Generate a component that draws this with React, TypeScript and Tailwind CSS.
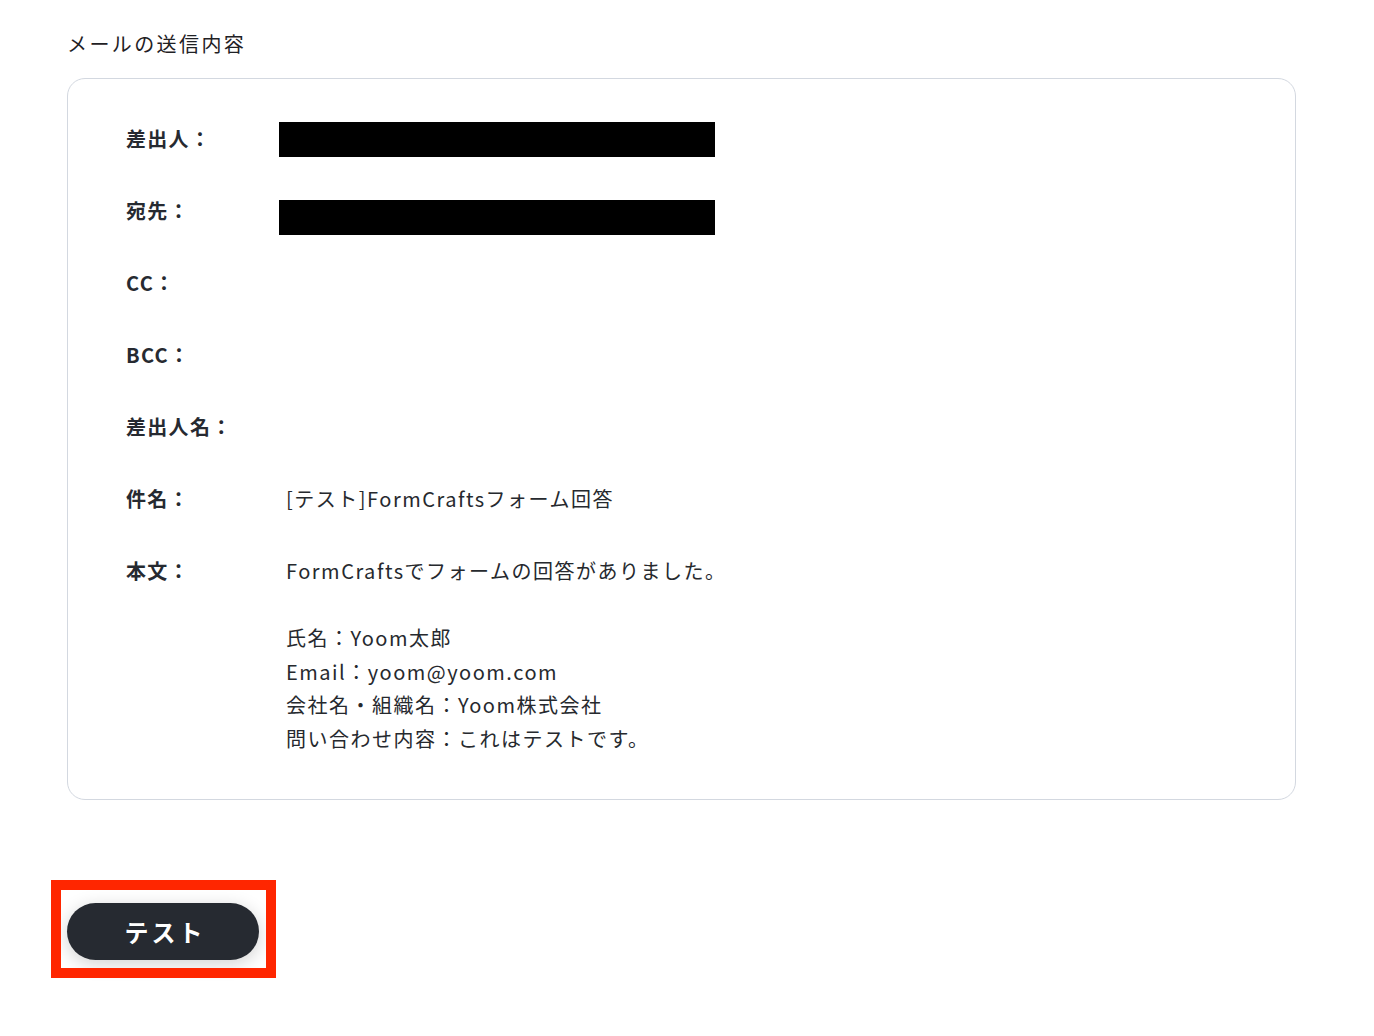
import React from "react";

const font = { fontFamily: '"Noto Sans CJK JP", "Noto Sans", sans-serif' };

function Row({ label, children }: { label: string; children?: React.ReactNode }) {
  return (
    <div className="flex">
      <div className="w-[160px] shrink-0 text-[20px] leading-[34px] font-bold text-[#262a31] tracking-[1.3px]">{label}</div>
      <div className="flex-1 relative text-[20px] leading-[34px] font-normal text-[#26292e] tracking-[1.5px]">{children}</div>
    </div>
  );
}

export default function App() {
  return (
    <div className="min-h-[1036px] bg-white pl-[67px] pt-[30px]" style={font}>
      <div className="text-[20px] leading-[28px] font-normal text-[#1f2125] tracking-[2.4px]">メールの送信内容</div>
      <div className="mt-[20px] w-[1229px] h-[722px] border border-[#d3d8e0] rounded-[18px] pl-[58px] pt-[43px] flex flex-col gap-[38px]">
        <Row label="差出人：">
          <div className="absolute left-[-7px] top-0 w-[436px] h-[35px] bg-black" />
          <span>&nbsp;</span>
        </Row>
        <Row label="宛先：">
          <div className="absolute left-[-7px] top-[6px] w-[436px] h-[35px] bg-black" />
          <span>&nbsp;</span>
        </Row>
        <Row label="CC：" />
        <Row label="BCC：" />
        <Row label="差出人名：" />
        <Row label="件名：">[テスト]FormCraftsフォーム回答</Row>
        <div className="flex">
          <div className="w-[160px] shrink-0 text-[20px] leading-[34px] font-bold text-[#262a31] tracking-[1.3px]">本文：</div>
          <div className="flex-1 text-[20px] leading-[33.5px] font-normal text-[#26292e] tracking-[1.5px]">
            <div>FormCraftsでフォームの回答がありました。</div>
            <div>&nbsp;</div>
            <div>氏名：Yoom太郎</div>
            <div>Email：yoom@yoom.com</div>
            <div>会社名・組織名：Yoom株式会社</div>
            <div>問い合わせ内容：これはテストです。</div>
          </div>
        </div>
      </div>
      <div className="mt-[103px] relative w-[192px]">
        <button className="w-[192px] h-[57px] pl-[4px] rounded-full bg-[#262a31] text-white text-[24px] font-bold tracking-[3px] shadow-[0_4px_18px_rgba(0,0,0,0.18)]" style={font}>
          テスト
        </button>
        <div className="absolute left-[-16px] top-[-23px] w-[225px] h-[98px] border-[10px] border-[#ff2600]" />
      </div>
    </div>
  );
}
